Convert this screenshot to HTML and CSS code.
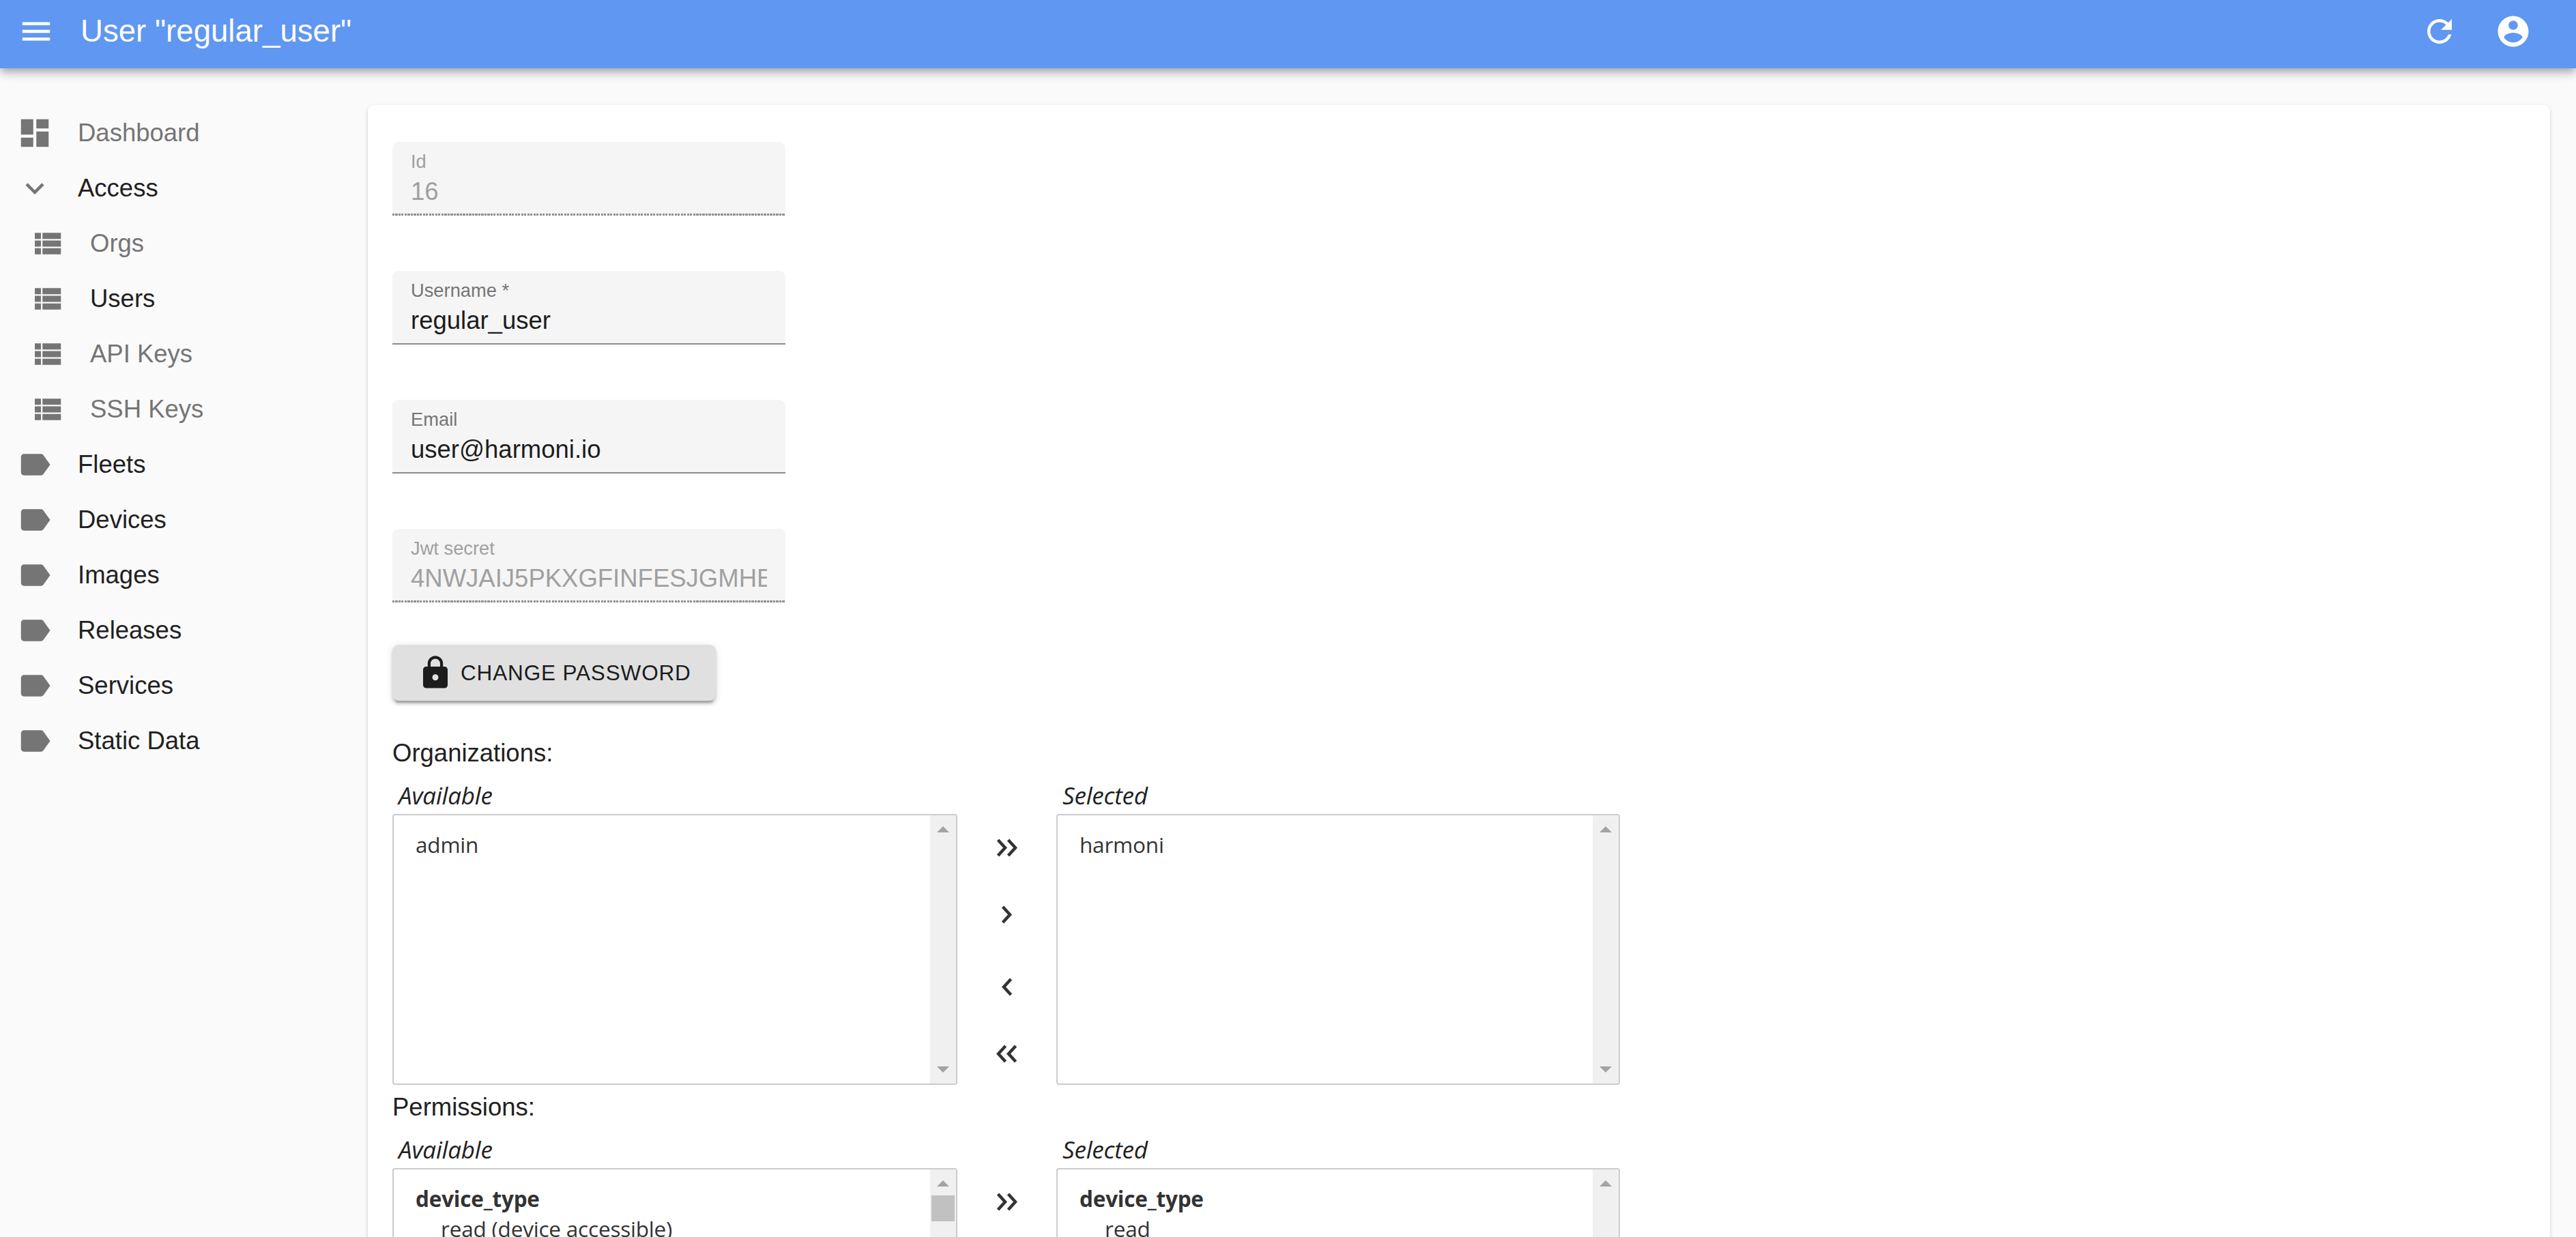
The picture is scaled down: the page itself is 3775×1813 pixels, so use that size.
FILE: index.html
```html
<!DOCTYPE html>
<html lang="en">
<head>
  <meta charset="UTF-8">
  <title>User "regular_user"</title>
  <link rel="stylesheet" href="styles.css">
</head>
<body>
  <svg class="sprite" aria-hidden="true">
    <symbol id="i-menu" viewBox="0 0 24 24"><path d="M3 18h18v-2H3v2zm0-5h18v-2H3v2zm0-7v2h18V6H3z"/></symbol>
    <symbol id="i-refresh" viewBox="0 0 24 24"><path d="M17.65 6.35C16.2 4.9 14.21 4 12 4c-4.42 0-7.99 3.58-7.99 8s3.57 8 7.99 8c3.73 0 6.84-2.55 7.73-6h-2.08c-.82 2.33-3.04 4-5.65 4-3.31 0-6-2.69-6-6s2.69-6 6-6c1.66 0 3.14.69 4.22 1.78L13 11h7V4l-2.35 2.35z"/></symbol>
    <symbol id="i-account" viewBox="0 0 24 24"><path d="M12 2C6.48 2 2 6.48 2 12s4.48 10 10 10 10-4.48 10-10S17.52 2 12 2zm0 3c1.66 0 3 1.34 3 3s-1.34 3-3 3-3-1.34-3-3 1.34-3 3-3zm0 14.2c-2.5 0-4.71-1.28-6-3.22.03-1.99 4-3.08 6-3.08 1.99 0 5.97 1.09 6 3.08-1.29 1.94-3.5 3.22-6 3.22z"/></symbol>
    <symbol id="i-dashboard" viewBox="0 0 24 24"><path d="M3 13h8V3H3v10zm0 8h8v-6H3v6zm10 0h8V11h-8v10zm0-18v6h8V3h-8z"/></symbol>
    <symbol id="i-expand" viewBox="0 0 24 24"><path d="M16.59 8.59L12 13.17 7.41 8.59 6 10l6 6 6-6z"/></symbol>
    <symbol id="i-list" viewBox="0 0 24 24"><path d="M4 14h4v-4H4v4zm0 5h4v-4H4v4zM4 9h4V5H4v4zm5 5h12v-4H9v4zm0 5h12v-4H9v4zM9 5v4h12V5H9z"/></symbol>
    <symbol id="i-label" viewBox="0 0 24 24"><path d="M17.63 5.84C17.27 5.33 16.67 5 16 5L5 5.01C3.9 5.01 3 5.9 3 7v10c0 1.1.9 1.99 2 1.99L16 19c.67 0 1.27-.33 1.63-.84L22 12l-4.37-6.16z"/></symbol>
    <symbol id="i-lock" viewBox="0 0 24 24"><path d="M18 8h-1V6c0-2.76-2.24-5-5-5S7 3.24 7 6v2H6c-1.1 0-2 .9-2 2v10c0 1.1.9 2 2 2h12c1.1 0 2-.9 2-2V10c0-1.1-.9-2-2-2zm-6 9c-1.1 0-2-.9-2-2s.9-2 2-2 2 .9 2 2-.9 2-2 2zm3.1-9H8.9V6c0-1.71 1.39-3.1 3.1-3.1 1.71 0 3.1 1.39 3.1 3.1v2z"/></symbol>
    <symbol id="i-all-right" viewBox="0 0 31 27"><path d="M2.5 2L13 13.5 2.5 25M17.5 2L28 13.5 17.5 25"/></symbol>
    <symbol id="i-one-right" viewBox="0 0 31 27"><path d="M9.5 2L20 13.5 9.5 25"/></symbol>
    <symbol id="i-one-left" viewBox="0 0 31 27"><path d="M21.5 2L11 13.5 21.5 25"/></symbol>
    <symbol id="i-all-left" viewBox="0 0 31 27"><path d="M13.5 2L3 13.5 13.5 25M28.5 2L18 13.5 28.5 25"/></symbol>
  </svg>

  <header class="app-bar">
    <svg class="icon menu-button"><use href="#i-menu"/></svg>
    <h1 class="app-title">User "regular_user"</h1>
    <svg class="icon bar-action"><use href="#i-refresh"/></svg>
    <svg class="icon bar-action"><use href="#i-account"/></svg>
  </header>

  <div class="layout">
    <nav class="sidebar">
      <a class="nav-item muted"><svg class="icon"><use href="#i-dashboard"/></svg>Dashboard</a>
      <a class="nav-item"><svg class="icon"><use href="#i-expand"/></svg>Access</a>
      <a class="nav-item sub muted"><svg class="icon"><use href="#i-list"/></svg>Orgs</a>
      <a class="nav-item sub"><svg class="icon"><use href="#i-list"/></svg>Users</a>
      <a class="nav-item sub muted"><svg class="icon"><use href="#i-list"/></svg>API Keys</a>
      <a class="nav-item sub muted"><svg class="icon"><use href="#i-list"/></svg>SSH Keys</a>
      <a class="nav-item"><svg class="icon"><use href="#i-label"/></svg>Fleets</a>
      <a class="nav-item"><svg class="icon"><use href="#i-label"/></svg>Devices</a>
      <a class="nav-item"><svg class="icon"><use href="#i-label"/></svg>Images</a>
      <a class="nav-item"><svg class="icon"><use href="#i-label"/></svg>Releases</a>
      <a class="nav-item"><svg class="icon"><use href="#i-label"/></svg>Services</a>
      <a class="nav-item"><svg class="icon"><use href="#i-label"/></svg>Static Data</a>
    </nav>

    <main class="card">
      <div class="field disabled">
        <div class="field-label">Id</div>
        <div class="field-value">16</div>
      </div>
      <div class="field">
        <div class="field-label">Username *</div>
        <div class="field-value">regular_user</div>
      </div>
      <div class="field">
        <div class="field-label">Email</div>
        <div class="field-value">user@harmoni.io</div>
      </div>
      <div class="field disabled">
        <div class="field-label">Jwt secret</div>
        <div class="field-value">4NWJAIJ5PKXGFINFESJGMHEXKQ</div>
      </div>

      <button class="raised-button"><svg class="icon"><use href="#i-lock"/></svg>CHANGE PASSWORD</button>

      <div class="group-title">Organizations:</div>
      <div class="dual-list">
        <div class="list-col">
          <div class="list-label">Available</div>
          <div class="list-box">
            <div class="list-items">
              <div class="list-item">admin</div>
            </div>
            <div class="scrollbar">
              <span class="arrow-up"></span>
              <span class="arrow-down"></span>
            </div>
          </div>
        </div>
        <div class="move-buttons">
          <svg class="move-icon"><use href="#i-all-right"/></svg>
          <svg class="move-icon"><use href="#i-one-right"/></svg>
          <svg class="move-icon"><use href="#i-one-left"/></svg>
          <svg class="move-icon"><use href="#i-all-left"/></svg>
        </div>
        <div class="list-col right">
          <div class="list-label">Selected</div>
          <div class="list-box">
            <div class="list-items">
              <div class="list-item">harmoni</div>
            </div>
            <div class="scrollbar">
              <span class="arrow-up"></span>
              <span class="arrow-down"></span>
            </div>
          </div>
        </div>
      </div>

      <div class="group-title permissions">Permissions:</div>
      <div class="dual-list">
        <div class="list-col">
          <div class="list-label">Available</div>
          <div class="list-box">
            <div class="list-items">
              <div class="list-item heading">device_type</div>
              <div class="list-item nested">read (device accessible)</div>
            </div>
            <div class="scrollbar">
              <span class="arrow-up"></span>
              <span class="thumb"></span>
              <span class="arrow-down"></span>
            </div>
          </div>
        </div>
        <div class="move-buttons">
          <svg class="move-icon"><use href="#i-all-right"/></svg>
          <svg class="move-icon"><use href="#i-one-right"/></svg>
          <svg class="move-icon"><use href="#i-one-left"/></svg>
          <svg class="move-icon"><use href="#i-all-left"/></svg>
        </div>
        <div class="list-col right">
          <div class="list-label">Selected</div>
          <div class="list-box">
            <div class="list-items">
              <div class="list-item heading">device_type</div>
              <div class="list-item nested">read</div>
            </div>
            <div class="scrollbar">
              <span class="arrow-up"></span>
              <span class="arrow-down"></span>
            </div>
          </div>
        </div>
      </div>
    </main>
  </div>
</body>
</html>
```

FILE: styles.css
```css
* {
  margin: 0;
  padding: 0;
  box-sizing: border-box;
}

html, body {
  height: 100%;
  overflow: hidden;
}

body {
  background: #fafafa;
  font-family: "Liberation Sans", Arial, sans-serif;
  font-size: 36.5px;
  color: #212121;
}

.sprite {
  display: none;
}

.icon {
  width: 54px;
  height: 54px;
  flex: none;
  fill: currentColor;
}

/* top bar */
.app-bar {
  position: relative;
  z-index: 2;
  height: 100px;
  display: flex;
  align-items: center;
  padding: 0 38px 8px 26px;
  background: #6097f2;
  color: #fff;
  box-shadow: 0 4.5px 9px -2.25px rgba(0,0,0,0.2), 0 9px 11px 0 rgba(0,0,0,0.14), 0 2px 22px 0 rgba(0,0,0,0.12);
}

.app-title {
  flex: 1;
  margin-left: 38px;
  font-size: 45.6px;
  font-weight: 400;
}

.bar-action {
  margin-right: 54px;
}

.bar-action:last-child {
  margin-right: 27px;
}

/* side menu */
.layout {
  display: flex;
  height: calc(100% - 100px);
}

.sidebar {
  width: 539px;
  flex: none;
  padding: 54px 0 0 24px;
}

.nav-item {
  display: flex;
  align-items: center;
  gap: 36px;
  height: 81px;
  color: #212121;
}

.nav-item .icon {
  color: #757575;
}

.nav-item.sub {
  padding-left: 18px;
}

.nav-item.muted {
  color: #757575;
}

/* main card */
.card {
  width: 3198px;
  height: 1800px;
  flex: none;
  margin-top: 54px;
  padding: 54px 36px;
  background: #fff;
  border-radius: 9px;
  box-shadow: 0 4.5px 2.25px -2.25px rgba(0,0,0,0.2), 0 2.25px 2.25px 0 rgba(0,0,0,0.14), 0 2.25px 6.75px 0 rgba(0,0,0,0.12);
}

.field {
  width: 576px;
  height: 108px;
  margin-bottom: 81px;
  padding: 11px 27px 0;
  background: #f5f5f5;
  border-radius: 9px 9px 0 0;
  border-bottom: 2.5px solid #8c8c8c;
}

.field-label {
  height: 36px;
  line-height: 36px;
  font-size: 27.3px;
  color: #757575;
}

.field-value {
  height: 52px;
  line-height: 52px;
  overflow: hidden;
  white-space: nowrap;
  color: #1c1c1c;
}

.field.disabled {
  border-bottom: 0;
  background: repeating-linear-gradient(90deg, #8f8f8f 0 3px, transparent 3px 4.5px) left bottom / 100% 3px no-repeat, #f5f5f5;
}

.field.disabled .field-label,
.field.disabled .field-value {
  color: #a0a0a0;
}

.raised-button {
  display: flex;
  align-items: center;
  gap: 10px;
  width: 474px;
  height: 82px;
  margin-top: -19px;
  padding-left: 36px;
  border: 0;
  border-radius: 9px;
  background: #e0e0e0;
  color: #1c1c1c;
  font-family: inherit;
  font-size: 31.5px;
  letter-spacing: 0.85px;
  box-shadow: 0 6.75px 2.25px -4.5px rgba(0,0,0,0.2), 0 4.5px 4.5px 0 rgba(0,0,0,0.14), 0 2.25px 11px 0 rgba(0,0,0,0.12);
}

.group-title {
  height: 45px;
  line-height: 45px;
  margin-top: 54px;
}

.group-title.permissions {
  margin-top: 8px;
}

/* dual listbox */
.dual-list {
  display: flex;
  font-family: "Open Sans", sans-serif;
  font-size: 31.5px;
  letter-spacing: -0.2px;
  color: #333;
}

.list-col {
  width: 828px;
  padding-top: 13px;
}

.list-col.right {
  width: 826px;
}

.list-label {
  height: 54px;
  line-height: 54px;
  padding-left: 9px;
  font-size: 35px;
  font-style: italic;
  color: #212121;
}

.list-box {
  display: flex;
  height: 397px;
  border: 2px solid #ccc;
  border-radius: 4px;
}

.list-items {
  flex: 1;
  padding: 21px 0 0 32px;
}

.list-item {
  height: 44px;
  line-height: 44px;
}

.list-item.heading {
  font-weight: 700;
}

.list-item.nested {
  padding-left: 37px;
}

.scrollbar {
  width: 38px;
  flex: none;
  display: flex;
  flex-direction: column;
  align-items: center;
  padding: 16px 0;
  background: #f0f0f0;
}

.arrow-up,
.arrow-down {
  width: 0;
  height: 0;
  border-left: 9px solid transparent;
  border-right: 9px solid transparent;
}

.arrow-up {
  border-bottom: 9px solid #a3a3a3;
}

.arrow-down {
  margin-top: auto;
  border-top: 9px solid #a3a3a3;
}

.thumb {
  width: 34px;
  height: 38px;
  margin-top: 13px;
  background: #c1c1c1;
}

.move-buttons {
  width: 145px;
  flex: none;
  padding-top: 67px;
  display: flex;
  flex-direction: column;
  align-items: center;
}

.move-icon {
  width: 31px;
  height: 27px;
  margin: 36px 0 34.5px;
  fill: none;
  stroke: #333;
  stroke-width: 4.5;
}

.move-icon:nth-child(3) {
  margin-top: 45px;
}
```
